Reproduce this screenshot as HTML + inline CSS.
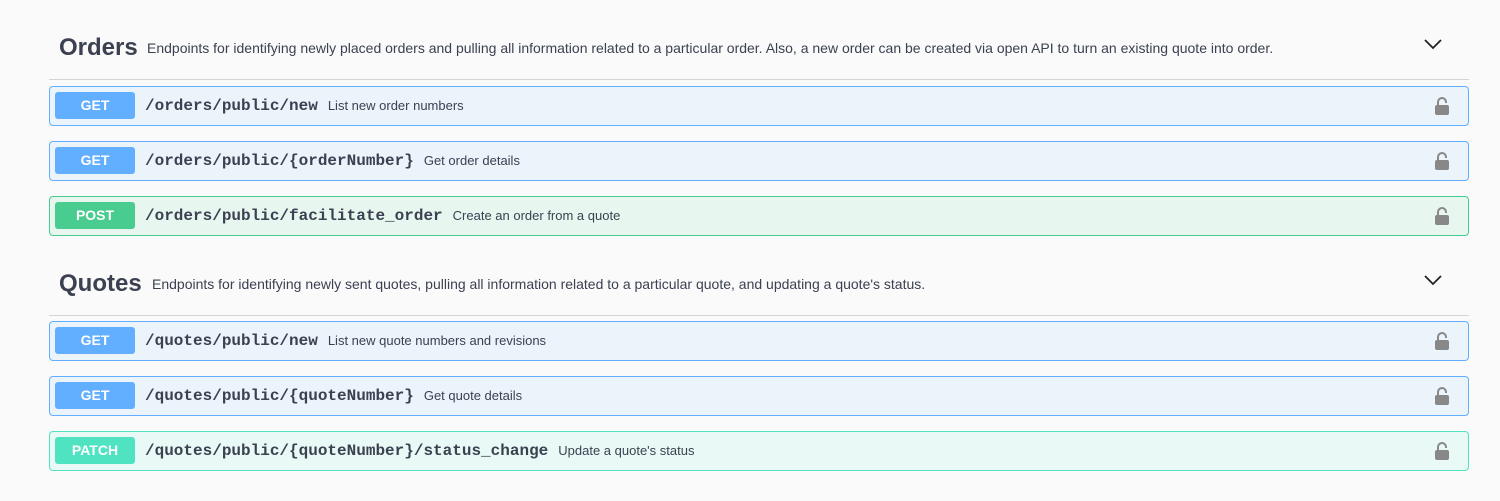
<!DOCTYPE html>
<html><head><style>
body{margin:0;background:#fafafa;font-family:"Liberation Sans",sans-serif;color:#3b4151;width:1500px;height:501px;overflow:hidden}
.tag{position:absolute;left:49px;width:1420px;border-bottom:1px solid #d4d4d4;height:0}
.h{position:absolute;left:59px;font-size:24px;font-weight:bold}
.d{position:absolute;font-size:14px}
.op{position:absolute;left:49px;width:1418px;height:38px;border:1px solid;border-radius:4px}
.get{background:#ebf3fb;border-color:#61affe}
.post{background:#e8f6f0;border-color:#49cc90}
.patch{background:#e9f9f5;border-color:#50e3c2}
.m{position:absolute;left:5px;top:5px;width:80px;height:27px;border-radius:3px;color:#fff;font-weight:bold;font-size:14px;text-align:center;line-height:27px}
.get .m{background:#61affe}.post .m{background:#49cc90}.patch .m{background:#50e3c2}
.p{position:absolute;left:95px;top:10px;font-family:"Liberation Mono",monospace;font-weight:bold;font-size:16px;letter-spacing:0}
.s{font-family:"Liberation Sans",sans-serif;font-weight:normal;font-size:13px;margin-left:10px;letter-spacing:0}
.lk{position:absolute;right:18px;top:9px}
.ch{position:absolute;left:1424px}
</style></head><body>
<div class="h" style="top:34px">Orders</div>
<div class="d" style="left:147px;top:40px">Endpoints for identifying newly placed orders and pulling all information related to a particular order. Also, a new order can be created via open API to turn an existing quote into order.</div>
<svg class="ch" style="top:38px" width="18" height="12"><path d="M1 2 L9 10 L17 2" fill="none" stroke="#222" stroke-width="1.8"/></svg>
<div class="tag" style="top:79px"></div>
<div class="op get" style="top:86px"><div class="m">GET</div><div class="p">/orders/public/new<span class="s">List new order numbers</span></div><svg class="lk" width="16" height="20"><path d="M4 10V6a4 4 0 0 1 8 0v1" fill="none" stroke="#888" stroke-width="2"/><rect x="1" y="9" width="14" height="10" rx="2" fill="#888"/></svg></div>
<div class="op get" style="top:141px"><div class="m">GET</div><div class="p">/orders/public/{orderNumber}<span class="s">Get order details</span></div><svg class="lk" width="16" height="20"><path d="M4 10V6a4 4 0 0 1 8 0v1" fill="none" stroke="#888" stroke-width="2"/><rect x="1" y="9" width="14" height="10" rx="2" fill="#888"/></svg></div>
<div class="op post" style="top:196px"><div class="m">POST</div><div class="p">/orders/public/facilitate_order<span class="s">Create an order from a quote</span></div><svg class="lk" width="16" height="20"><path d="M4 10V6a4 4 0 0 1 8 0v1" fill="none" stroke="#888" stroke-width="2"/><rect x="1" y="9" width="14" height="10" rx="2" fill="#888"/></svg></div>
<div class="h" style="top:270px">Quotes</div>
<div class="d" style="left:152px;top:276px">Endpoints for identifying newly sent quotes, pulling all information related to a particular quote, and updating a quote's status.</div>
<svg class="ch" style="top:274px" width="18" height="12"><path d="M1 2 L9 10 L17 2" fill="none" stroke="#222" stroke-width="1.8"/></svg>
<div class="tag" style="top:315px"></div>
<div class="op get" style="top:321px"><div class="m">GET</div><div class="p">/quotes/public/new<span class="s">List new quote numbers and revisions</span></div><svg class="lk" width="16" height="20"><path d="M4 10V6a4 4 0 0 1 8 0v1" fill="none" stroke="#888" stroke-width="2"/><rect x="1" y="9" width="14" height="10" rx="2" fill="#888"/></svg></div>
<div class="op get" style="top:376px"><div class="m">GET</div><div class="p">/quotes/public/{quoteNumber}<span class="s">Get quote details</span></div><svg class="lk" width="16" height="20"><path d="M4 10V6a4 4 0 0 1 8 0v1" fill="none" stroke="#888" stroke-width="2"/><rect x="1" y="9" width="14" height="10" rx="2" fill="#888"/></svg></div>
<div class="op patch" style="top:431px"><div class="m">PATCH</div><div class="p">/quotes/public/{quoteNumber}/status_change<span class="s">Update a quote's status</span></div><svg class="lk" width="16" height="20"><path d="M4 10V6a4 4 0 0 1 8 0v1" fill="none" stroke="#888" stroke-width="2"/><rect x="1" y="9" width="14" height="10" rx="2" fill="#888"/></svg></div>
</body></html>
